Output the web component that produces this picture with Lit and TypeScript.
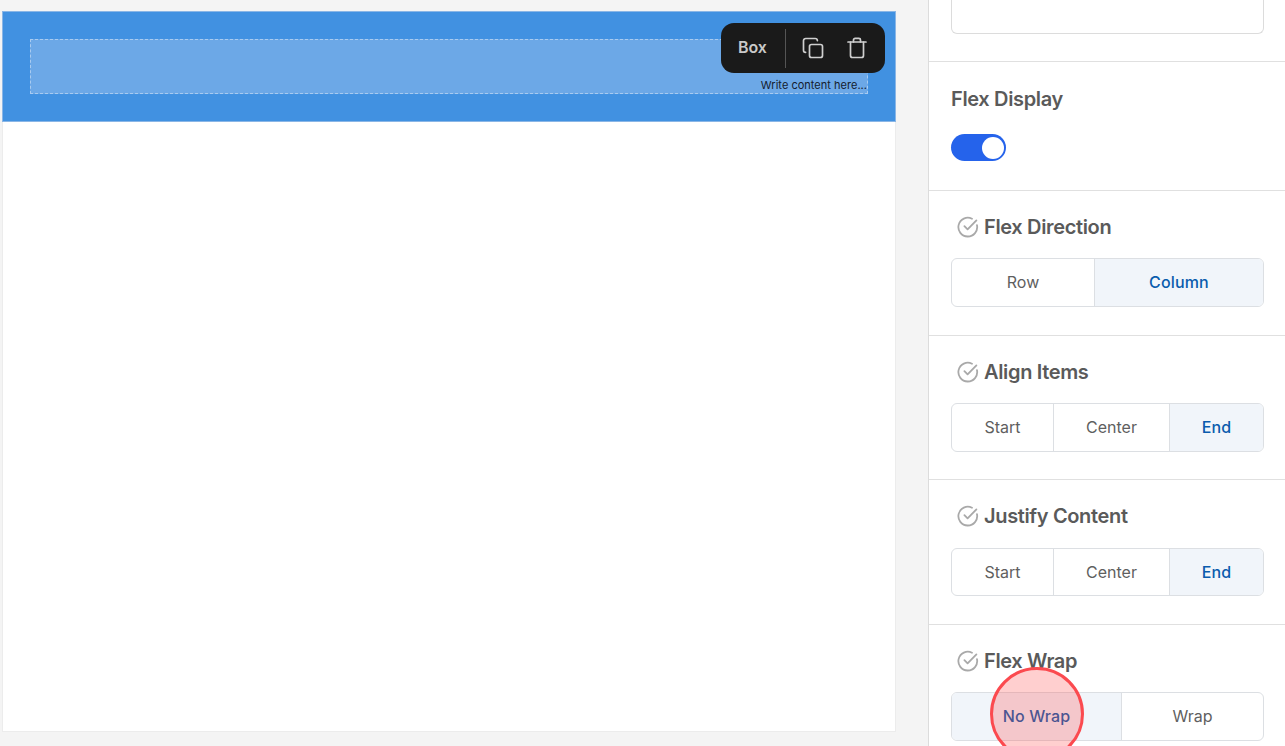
import { LitElement, html, css } from "lit";
import { customElement } from "lit/decorators.js";

const check = html`<svg class="chk" width="22" height="22" viewBox="0 0 22 22" fill="none" stroke="#a9a9a9" stroke-width="1.8" stroke-linecap="round" stroke-linejoin="round"><path d="M20 9.200A9.400 9.400 0 1 1 15 2.700"/><path d="M7.400 10.200l3.200 3.200 8.800-9"/></svg>`;

@customElement("app-root")
export class AppRoot extends LitElement {
  static styles = css`
    :host { display: block; width: 1285px; height: 746px; overflow: hidden; background: #f4f4f4; font-family: Inter, "Noto Sans", sans-serif; }
    .page { display: grid; grid-template-columns: 928px 357px; height: 746px; }
    .left { padding: 11px 0 0 2px; }
    .canvas { width: 894px; height: 721px; background: #fff; box-sizing: border-box; box-shadow: 0 0 0 1px #ececec inset; position: relative; }
    .blue { box-sizing: border-box; height: 111px; background: #4191e1; border: 1px solid #8ab6e6; padding: 27px; }
    .inner { box-sizing: border-box; height: 55px; background: #6ca8e7; border: 1px dashed #a9cbf0; display: flex; flex-direction: column; justify-content: flex-end; align-items: flex-end; }
    .inner span { font-size: 11px; line-height: 16px; color: #14202e; letter-spacing: 0.02px; }
    .toolbar { position: absolute; left: 719px; top: 12px; width: 164px; height: 50px; box-sizing: border-box; background: #1a1a1a; border-radius: 13px; display: flex; align-items: center; padding-left: 17px; color: #c9c9c9; font-size: 16px; font-weight: 600; }
    .toolbar .lab { width: 46.500px; letter-spacing: -0.100px; position: relative; top: -1px; }
    .toolbar .sep { width: 1.500px; height: 39px; background: #555; margin-right: 15.500px; }
    .toolbar svg { display: block; }
    .toolbar .trash { margin-left: 22px; }
    .right { background: #fff; border-left: 1px solid #dcdcdc; position: relative; overflow: hidden; }
    .sec { border-bottom: 1px solid #e0e0e0; box-sizing: border-box; padding: 0 21px 0 22px; }
    .s0 { height: 62px; }
    .input { box-sizing: border-box; width: 313px; height: 34px; border: 1px solid #dcdcdc; border-top: 0; border-radius: 0 0 6px 6px; }
    .s1 { height: 129px; padding-top: 23px; }
    .s1 .ttl { line-height: 28px; }
    .toggle { margin-top: 21px; width: 55px; height: 27px; border-radius: 14px; background: #2563eb; position: relative; }
    .toggle i { position: absolute; right: 2px; top: 2.500px; width: 22px; height: 22px; border-radius: 50%; background: #fff; }
    .sx { height: 145px; padding-top: 23px; }
    .sx.b { height: 144px; }
    .sx.c { height: 145px; }
    .sx.last { border-bottom: 0; }
    .head { display: flex; align-items: center; gap: 5px; height: 26px; padding-left: 6px; }
    .chk { flex: none; }
    .ttl { font-size: 20px; font-weight: 600; color: #5a5a5a; letter-spacing: -0.350px; }
    .seg { margin-top: 18px; width: 313px; height: 49px; box-sizing: border-box; border: 1px solid #dcdfe3; border-radius: 6px; display: flex; overflow: hidden; }
    .sx.c .seg { margin-top: 19px; height: 48px; }
    .seg div { display: flex; align-items: center; justify-content: center; font-size: 16px; line-height: 20px; padding-bottom: 2px; color: #5f5f5f; box-sizing: border-box; }
    .sx.c .seg div { padding-bottom: 1px; }
    .seg div + div { border-left: 1px solid #dcdfe3; }
    .seg .on { background: #f1f5fa; color: #0a5cad; font-weight: 500; letter-spacing: 0.150px; }
    .ring { position: absolute; left: 61px; top: 667px; width: 94px; height: 94px; box-sizing: border-box; border-radius: 50%; border: 3.500px solid #fb4a4f; background: rgba(255, 70, 70, 0.26); }
  `;

  seg(items: [string, number, boolean][]) {
    return html`<div class="seg">${items.map(([t, w, on]) => html`<div class="${on ? "on" : ""}" style="width:${w}px">${t}</div>`)}</div>`;
  }

  sect(title: string, cls: string, items: [string, number, boolean][]) {
    return html`<div class="sec sx ${cls}"><div class="head">${check}<span class="ttl">${title}</span></div>${this.seg(items)}</div>`;
  }

  render() {
    return html`<div class="page">
      <div class="left">
        <div class="canvas">
          <div class="blue"><div class="inner"><span>Write content here...</span></div></div>
          <div class="toolbar">
            <span class="lab">Box</span><span class="sep"></span>
            <svg width="22" height="22" viewBox="0 0 22 22" fill="none" stroke="#cfcfcf" stroke-width="1.700" stroke-linecap="round" stroke-linejoin="round"><rect x="7.500" y="7.500" width="13" height="13" rx="2"/><path d="M3.600 15.400A2.200 2.200 0 0 1 1.500 13.200V3.700A2.200 2.200 0 0 1 3.700 1.500h9.500a2.200 2.200 0 0 1 2.200 2.100"/></svg>
            <svg class="trash" width="22" height="22" viewBox="0 0 22 22" fill="none" stroke="#cfcfcf" stroke-width="1.700" stroke-linecap="round" stroke-linejoin="round"><path d="M2 5h18"/><path d="M4.500 5v13.500a2 2 0 0 0 2 2h9a2 2 0 0 0 2-2V5"/><path d="M7.500 5V3a1.600 1.600 0 0 1 1.600-1.600h3.800A1.600 1.600 0 0 1 14.500 3v2"/></svg>
          </div>
        </div>
      </div>
      <div class="right">
        <div class="sec s0"><div class="input"></div></div>
        <div class="sec s1"><div class="ttl">Flex Display</div><div class="toggle"><i></i></div></div>
        ${this.sect("Flex Direction", "", [["Row", 142, false], ["Column", 169, true]])}
        ${this.sect("Align Items", "b", [["Start", 101, false], ["Center", 116, false], ["End", 94, true]])}
        ${this.sect("Justify Content", "c", [["Start", 101, false], ["Center", 116, false], ["End", 94, true]])}
        ${this.sect("Flex Wrap", "last", [["No Wrap", 169, true], ["Wrap", 142, false]])}
        <div class="ring"></div>
      </div>
    </div>`;
  }
}
